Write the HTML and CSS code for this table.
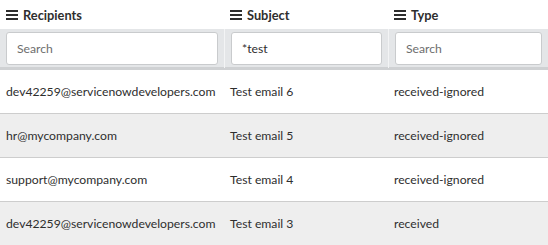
FILE: index.html
```html
<!DOCTYPE html>
<html lang="en">

<head>
    <meta charset="UTF-8">
    <title>Email list</title>
    <link rel="stylesheet" href="styles.css">
</head>

<body>
    <div class="listTable">
        <div class="headRow">
            <div class="headCell">
                <svg class="menuIcon" width="12" height="10" viewBox="0 0 12 10"><rect y="0" width="12" height="2"/><rect y="4" width="12" height="2"/><rect y="8" width="12" height="2"/></svg>
                Recipients
            </div>
            <div class="headCell">
                <svg class="menuIcon" width="12" height="10" viewBox="0 0 12 10"><rect y="0" width="12" height="2"/><rect y="4" width="12" height="2"/><rect y="8" width="12" height="2"/></svg>
                Subject
            </div>
            <div class="headCell">
                <svg class="menuIcon" width="12" height="10" viewBox="0 0 12 10"><rect y="0" width="12" height="2"/><rect y="4" width="12" height="2"/><rect y="8" width="12" height="2"/></svg>
                Type
            </div>
        </div>
        <div class="filterRow">
            <div class="filterCell"><input type="text" placeholder="Search"></div>
            <div class="filterCell"><input type="text" value="*test"></div>
            <div class="filterCell"><input type="text" placeholder="Search"></div>
        </div>
        <div class="row">
            <div class="cell">dev42259@servicenowdevelopers.com</div>
            <div class="cell">Test email 6</div>
            <div class="cell">received-ignored</div>
        </div>
        <div class="row odd">
            <div class="cell">hr@mycompany.com</div>
            <div class="cell">Test email 5</div>
            <div class="cell">received-ignored</div>
        </div>
        <div class="row">
            <div class="cell">support@mycompany.com</div>
            <div class="cell">Test email 4</div>
            <div class="cell">received-ignored</div>
        </div>
        <div class="row odd">
            <div class="cell">dev42259@servicenowdevelopers.com</div>
            <div class="cell">Test email 3</div>
            <div class="cell">received</div>
        </div>
    </div>
</body>

</html>
```
FILE: styles.css
```css
* {
    margin: 0;
    padding: 0;
    box-sizing: border-box;
}

body {
    font-family: Lato, "Liberation Sans", sans-serif;
    font-size: 12.2px;
    color: #2e2e2e;
    background-color: #fff;
}

.headRow,
.filterRow,
.row {
    display: grid;
    grid-template-columns: 224px 164px 160px;
}

.headRow {
    height: 29px;
}

.headCell {
    display: flex;
    align-items: center;
    gap: 5px;
    padding-left: 6px;
    font-size: 12.8px;
    font-weight: bold;
}

.menuIcon {
    fill: #2e2e2e;
}

.filterRow {
    background-color: #e4e6e8;
    border-bottom: 3px solid #cfd1d3;
    height: 41px;
}

.filterCell {
    padding: 3px 6px 3px 6px;
    border-left: 1px solid #f3f4f5;
}

.filterCell:first-child {
    border-left: 0;
}

.filterCell input {
    width: 100%;
    height: 33px;
    border: 1px solid #c9cbcd;
    border-radius: 3px;
    padding: 0 10px;
    font-family: inherit;
    font-size: 12.2px;
    color: #2e2e2e;
    outline: none;
}

.filterCell input::placeholder {
    color: #6e6e6e;
}

.row {
    height: 44px;
    border-bottom: 1px solid #cdcdcd;
}

.row.odd {
    background-color: #eeeeee;
}

.cell {
    display: flex;
    align-items: center;
    padding-left: 6px;
    padding-bottom: 1px;
    white-space: nowrap;
}
```
